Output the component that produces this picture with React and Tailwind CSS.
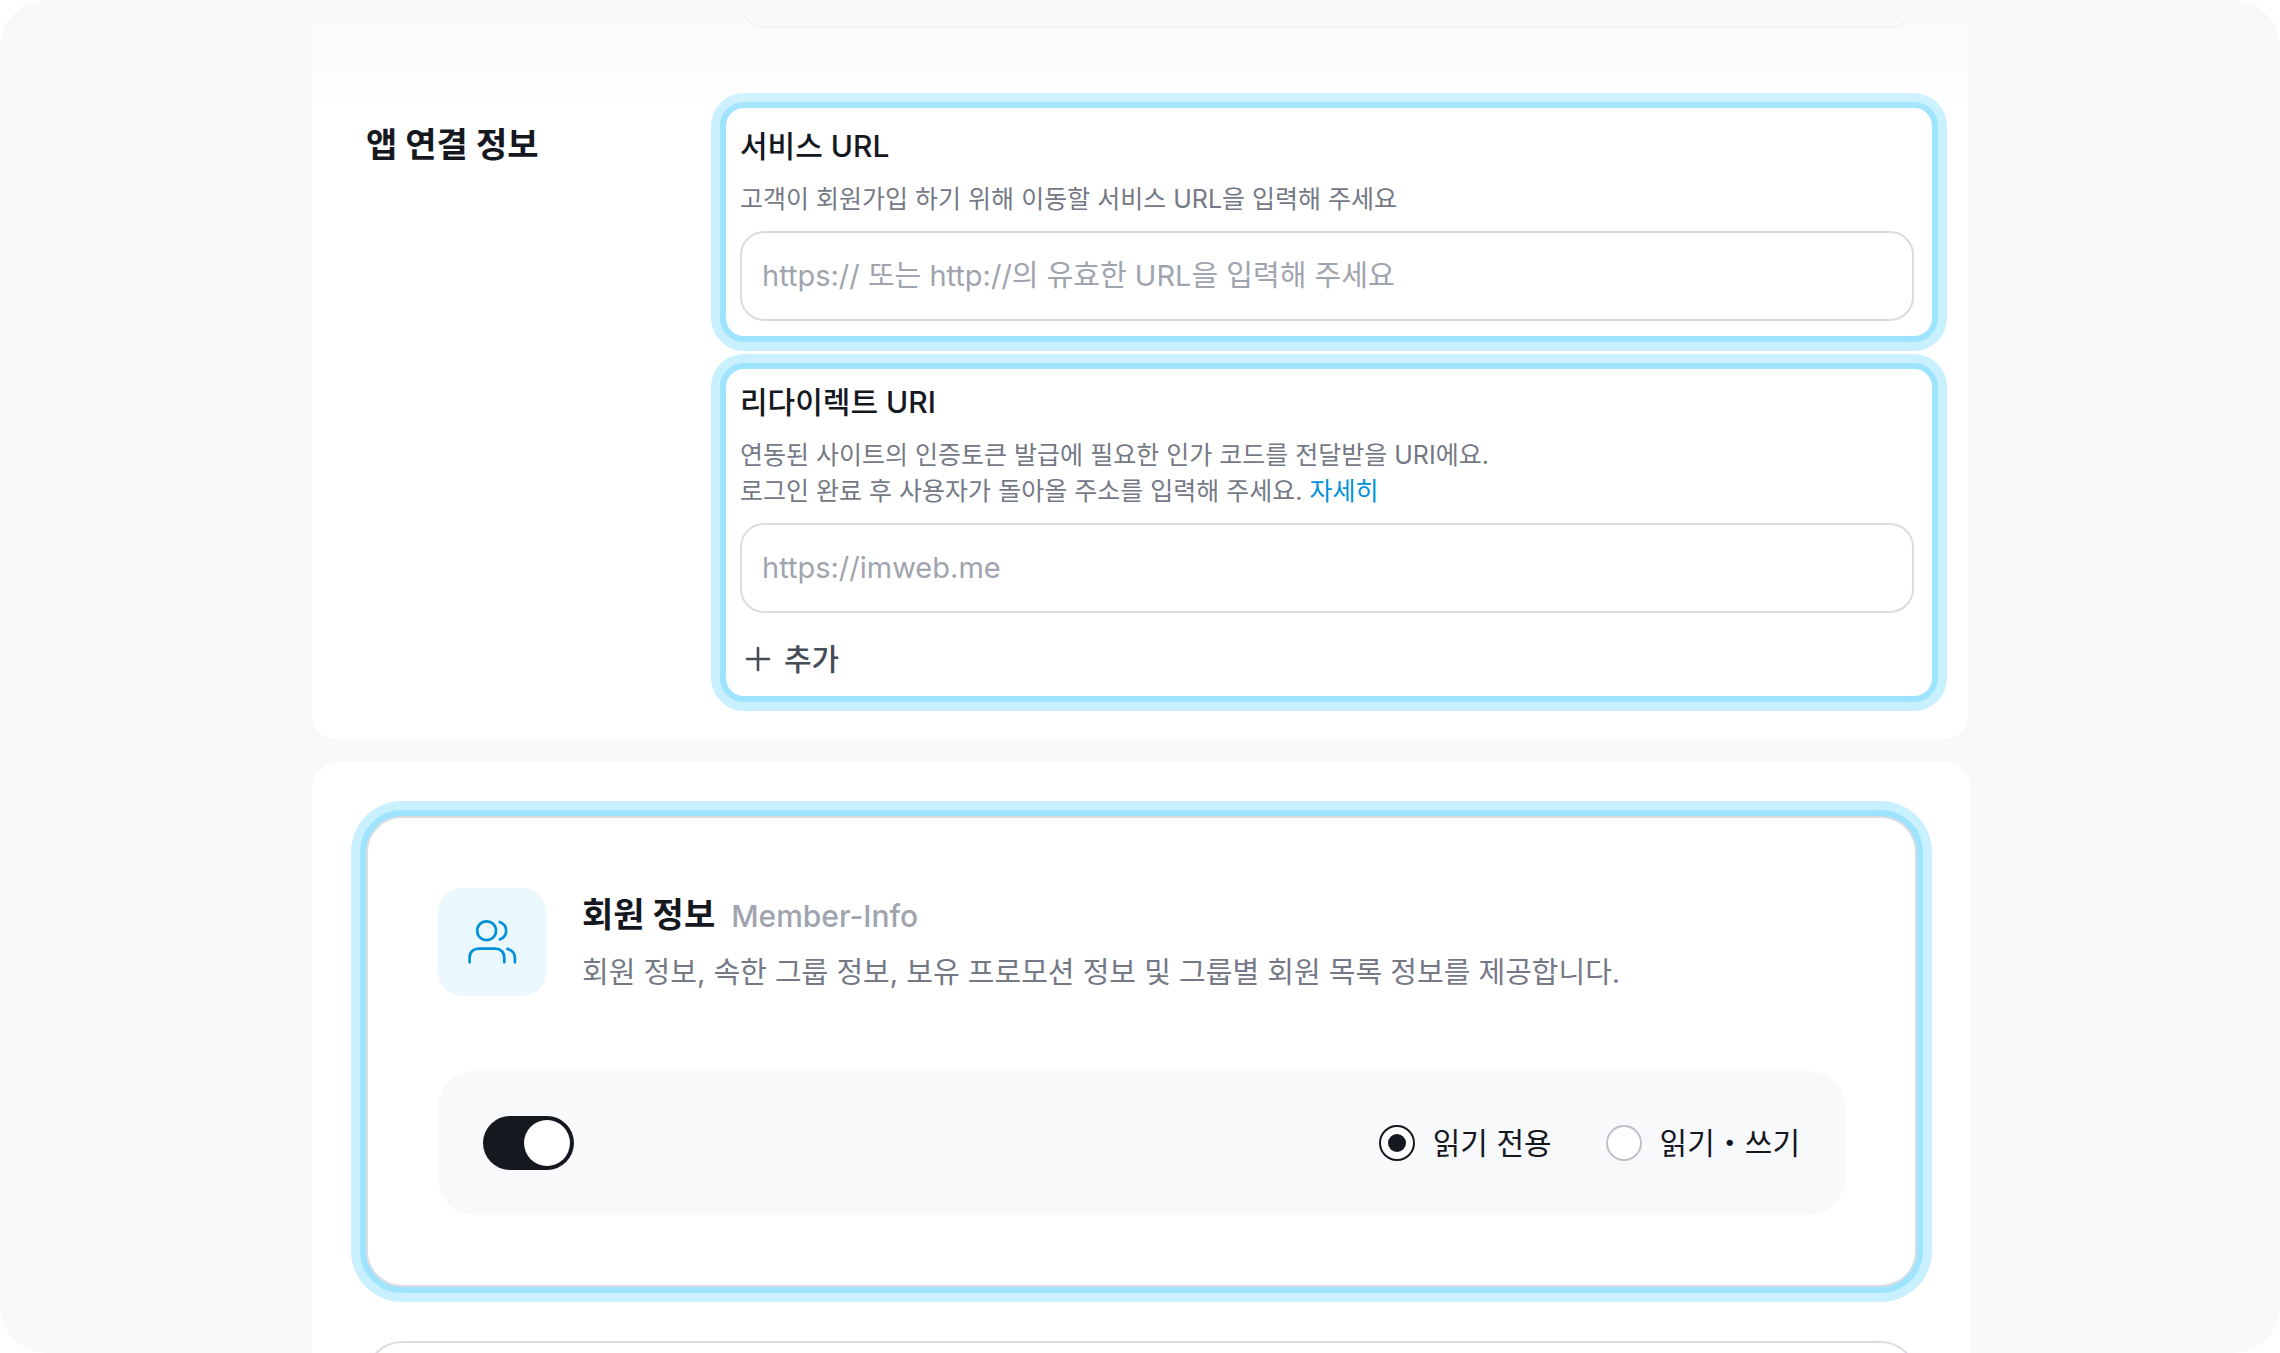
import { useState } from 'react';

const fieldClass =
  'block h-[90px] w-full rounded-3xl border-2 border-[#dadce3] bg-white px-5 pb-0.5 text-[29px] text-[#15181e] outline-none placeholder:text-[#a0a4ae]';

function HighlightBox({ children }) {
  return (
    <div className="rounded-3xl border-[6px] border-[#9ee4ff] bg-white pl-3.5 pr-[18px] ring-[9px] ring-[#c8f0ff]">
      {children}
    </div>
  );
}

function PlusIcon() {
  return (
    <svg width="36" height="36" viewBox="0 0 36 36" fill="none" stroke="#474c57" strokeWidth="2.6" strokeLinecap="round">
      <path d="M18 7v22M7 18h22" />
    </svg>
  );
}

function MembersIcon() {
  return (
    <svg width="54" height="54" viewBox="0 0 54 54" fill="none" stroke="#0092d9" strokeWidth="2.7" strokeLinecap="round">
      <circle cx="21.6" cy="15.7" r="9.4" />
      <path d="M34.7 7c4 1.500 6.500 4.800 6.500 8.700s-2.500 7.300-6.500 8.700" />
      <path d="M4.600 47.300v-4.800c0-5.500 3.900-8.800 9-8.800h16.700c5.100 0 9 3.300 9 8.800v4.800" />
      <path d="M42.400 33.900c4.700 1.200 7.500 4.600 7.500 8.900v4.500" />
    </svg>
  );
}

function Toggle({ checked, onChange }) {
  return (
    <button
      type="button"
      role="switch"
      aria-checked={checked}
      aria-label="회원 정보"
      onClick={() => onChange(!checked)}
      className={`flex h-[54px] w-[91px] items-center rounded-full p-1 ${checked ? 'justify-end bg-[#15181e]' : 'justify-start bg-[#bfc2cb]'}`}
    >
      <span className="size-[46px] rounded-full bg-white" />
    </button>
  );
}

function ScopeRadio({ label, value, scope, onChange }) {
  return (
    <label className="flex items-center gap-[18px] text-[30px] leading-9 text-[#15181e]">
      <input
        type="radio"
        name="scope"
        value={value}
        checked={scope === value}
        onChange={() => onChange(value)}
        className="grid size-9 appearance-none place-items-center rounded-full border-2 border-[#bfc2cb] bg-white checked:border-[#15181e] checked:before:size-[18px] checked:before:rounded-full checked:before:bg-[#15181e]"
      />
      {label}
    </label>
  );
}

export default function App() {
  const [enabled, setEnabled] = useState(true);
  const [scope, setScope] = useState('read');
  const [serviceUrl, setServiceUrl] = useState('');
  const [redirectUris, setRedirectUris] = useState(['']);

  const updateUri = (index, value) => {
    setRedirectUris(redirectUris.map((uri, i) => (i === index ? value : uri)));
  };

  return (
    <div className="relative h-screen overflow-hidden rounded-[48px] bg-[#f8f9fb] font-['Inter','Noto_Sans_CJK_KR',sans-serif] text-[#15181e]">
      <main className="mx-auto max-w-[1662px] pl-[3px]">
        <section className="mr-[3px] flex rounded-b-3xl bg-white pb-[37px] pl-[54px] pr-[30px]">
          <h2 className="w-[354px] shrink-0 pt-[121px] text-[34px] font-bold leading-[48px]">앱 연결 정보</h2>
          <div className="min-w-0 flex-1">
            {/* tail of the field that is scrolled away */}
            <div className="mb-[74px] ml-5 mr-6 h-7 rounded-b-3xl border-2 border-t-0 border-[#dadce3]" />

            <div className="space-y-[21px]">
              <HighlightBox>
                <label htmlFor="service-url" className="block pt-[17px] text-[30px] font-medium leading-[42px]">
                  서비스 URL
                </label>
                <p className="my-3.5 text-[25px] leading-9 text-[#757985]">
                  고객이 회원가입 하기 위해 이동할 서비스 URL을 입력해 주세요
                </p>
                <input
                  id="service-url"
                  type="url"
                  value={serviceUrl}
                  onChange={(e) => setServiceUrl(e.target.value)}
                  placeholder="https:// 또는 http://의 유효한 URL을 입력해 주세요"
                  className={fieldClass}
                />
                <div className="h-[15px]" />
              </HighlightBox>

              <HighlightBox>
                <label htmlFor="redirect-uri-0" className="block pt-3 text-[30px] font-medium leading-[42px]">
                  리다이렉트 URI
                </label>
                <p className="my-3.5 text-[25px] leading-9 text-[#757985]">
                  연동된 사이트의 인증토큰 발급에 필요한 인가 코드를 전달받을 URI에요.
                  <br />
                  로그인 완료 후 사용자가 돌아올 주소를 입력해 주세요.{' '}
                  <a href="#redirect-uri" className="text-[#0092d9]">자세히</a>
                </p>
                <div className="space-y-3">
                  {redirectUris.map((uri, i) => (
                    <input
                      key={i}
                      id={`redirect-uri-${i}`}
                      type="url"
                      aria-label={i > 0 ? `리다이렉트 URI ${i + 1}` : undefined}
                      value={uri}
                      onChange={(e) => updateUri(i, e.target.value)}
                      placeholder="https://imweb.me"
                      className={fieldClass}
                    />
                  ))}
                </div>
                <button
                  type="button"
                  onClick={() => setRedirectUris([...redirectUris, ''])}
                  className="mb-[15px] mt-6 flex h-11 items-center gap-2 text-[30px] font-medium text-[#474c57]"
                >
                  <PlusIcon />
                  추가
                </button>
              </HighlightBox>
            </div>
          </div>
        </section>

        <section className="mt-[23px] rounded-t-[27px] bg-white p-12">
          <article className="rounded-[42px] border-[6px] border-[#9ee4ff] bg-[#9ee4ff] ring-[9px] ring-[#c8f0ff]">
            <div className="rounded-[36px] border-2 border-[#dadce3] bg-white p-[70px]">
              <div className="flex items-center gap-9">
                <div className="flex size-[108px] shrink-0 items-center justify-center rounded-3xl bg-[#ebf9ff]">
                  <MembersIcon />
                </div>
                <div>
                  <h3 className="flex items-baseline gap-4 text-[34px] font-bold leading-[48px]">
                    회원 정보
                    <span className="text-[30px] font-medium text-[#a0a4ae]">Member-Info</span>
                  </h3>
                  <p className="mt-3 text-[29px] leading-[42px] text-[#757985]">
                    회원 정보, 속한 그룹 정보, 보유 프로모션 정보 및 그룹별 회원 목록 정보를 제공합니다.
                  </p>
                </div>
              </div>

              <div className="mt-[75px] flex h-36 items-center justify-between rounded-[36px] bg-[#f8f9fb] px-[45px]">
                <Toggle checked={enabled} onChange={setEnabled} />
                <div className="flex gap-[54px]">
                  <ScopeRadio label="읽기 전용" value="read" scope={scope} onChange={setScope} />
                  <ScopeRadio label="읽기・쓰기" value="write" scope={scope} onChange={setScope} />
                </div>
              </div>
            </div>
          </article>

          {/* next permission card, cut off by the window */}
          <article className="mx-1.5 mt-12 h-40 rounded-[36px] border-2 border-[#dadce3]" />
        </section>
      </main>

      <div className="pointer-events-none absolute inset-x-0 top-0 h-[116px] bg-linear-to-b from-[#f8f9fb] to-[#f8f9fb]/0" />
    </div>
  );
}
